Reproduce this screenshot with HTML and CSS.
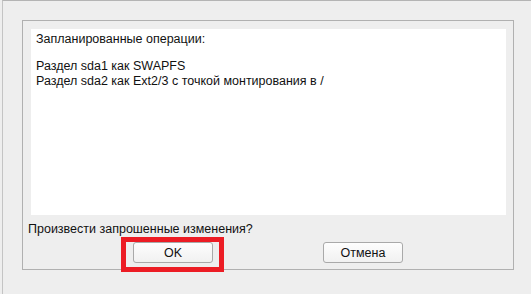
FILE: index.html
```html
<!DOCTYPE html>
<html>
  <head>
    <meta charset="UTF-8">
    <title>Подтверждение</title>
    <link rel="stylesheet" href="styles.css">
  </head>
  <body>
    <div class="window">
      <div class="panel">
        <div class="log">
          <div class="log-title">Запланированные операции:</div>
          <div class="log-line">Раздел sda1 как SWAPFS</div>
          <div class="log-line">Раздел sda2 как Ext2/3 с точкой монтирования в /</div>
        </div>
        <div class="question">Произвести запрошенные изменения?</div>
        <div class="buttons">
          <button class="btn btn-ok">OK<span class="highlight"></span></button>
          <button class="btn">Отмена</button>
        </div>
      </div>
    </div>
  </body>
</html>
```

FILE: styles.css
```css
body {
  margin: 0;
  background: #eeeeee;
  font-family: "Liberation Sans", Arial, sans-serif;
  font-size: 12.5px;
  line-height: 15px;
  color: #111;
}

.window {
  height: 293px;
  margin-left: 2px;
  border-top: 1px solid #b4b4b4;
  border-left: 1px solid #c4c4c4;
  overflow: hidden;
}

/* inner framed area */
.panel {
  width: 478px;
  margin: 19px 0 0 19px;
  padding: 8px 7px 6px 5px;
  border: 1px solid #b0b0b0;
}

.log {
  height: 183px;
  margin-left: 3px;
  padding: 3px 5px 0 5px;
  background: #ffffff;
}

.log-title {
  margin-bottom: 12px;
}

.question {
  margin-top: 7px;
}

.buttons {
  display: flex;
  justify-content: space-evenly;
  margin-top: 5px;
  margin-left: -5px;
  margin-right: -7px;
}

.btn {
  position: relative;
  width: 80px;
  height: 21px;
  padding: 0;
  border: 1px solid #a9a9a9;
  border-radius: 3px;
  background: linear-gradient(#fdfdfd, #f1f1f1);
  font-family: "Liberation Sans", Arial, sans-serif;
  font-size: 12.5px;
  color: #111;
}

/* red marker drawn over the OK button */
.highlight {
  position: absolute;
  left: -13px;
  top: -6px;
  width: 93px;
  height: 25px;
  border: 5px solid #ec1c24;
}
```
